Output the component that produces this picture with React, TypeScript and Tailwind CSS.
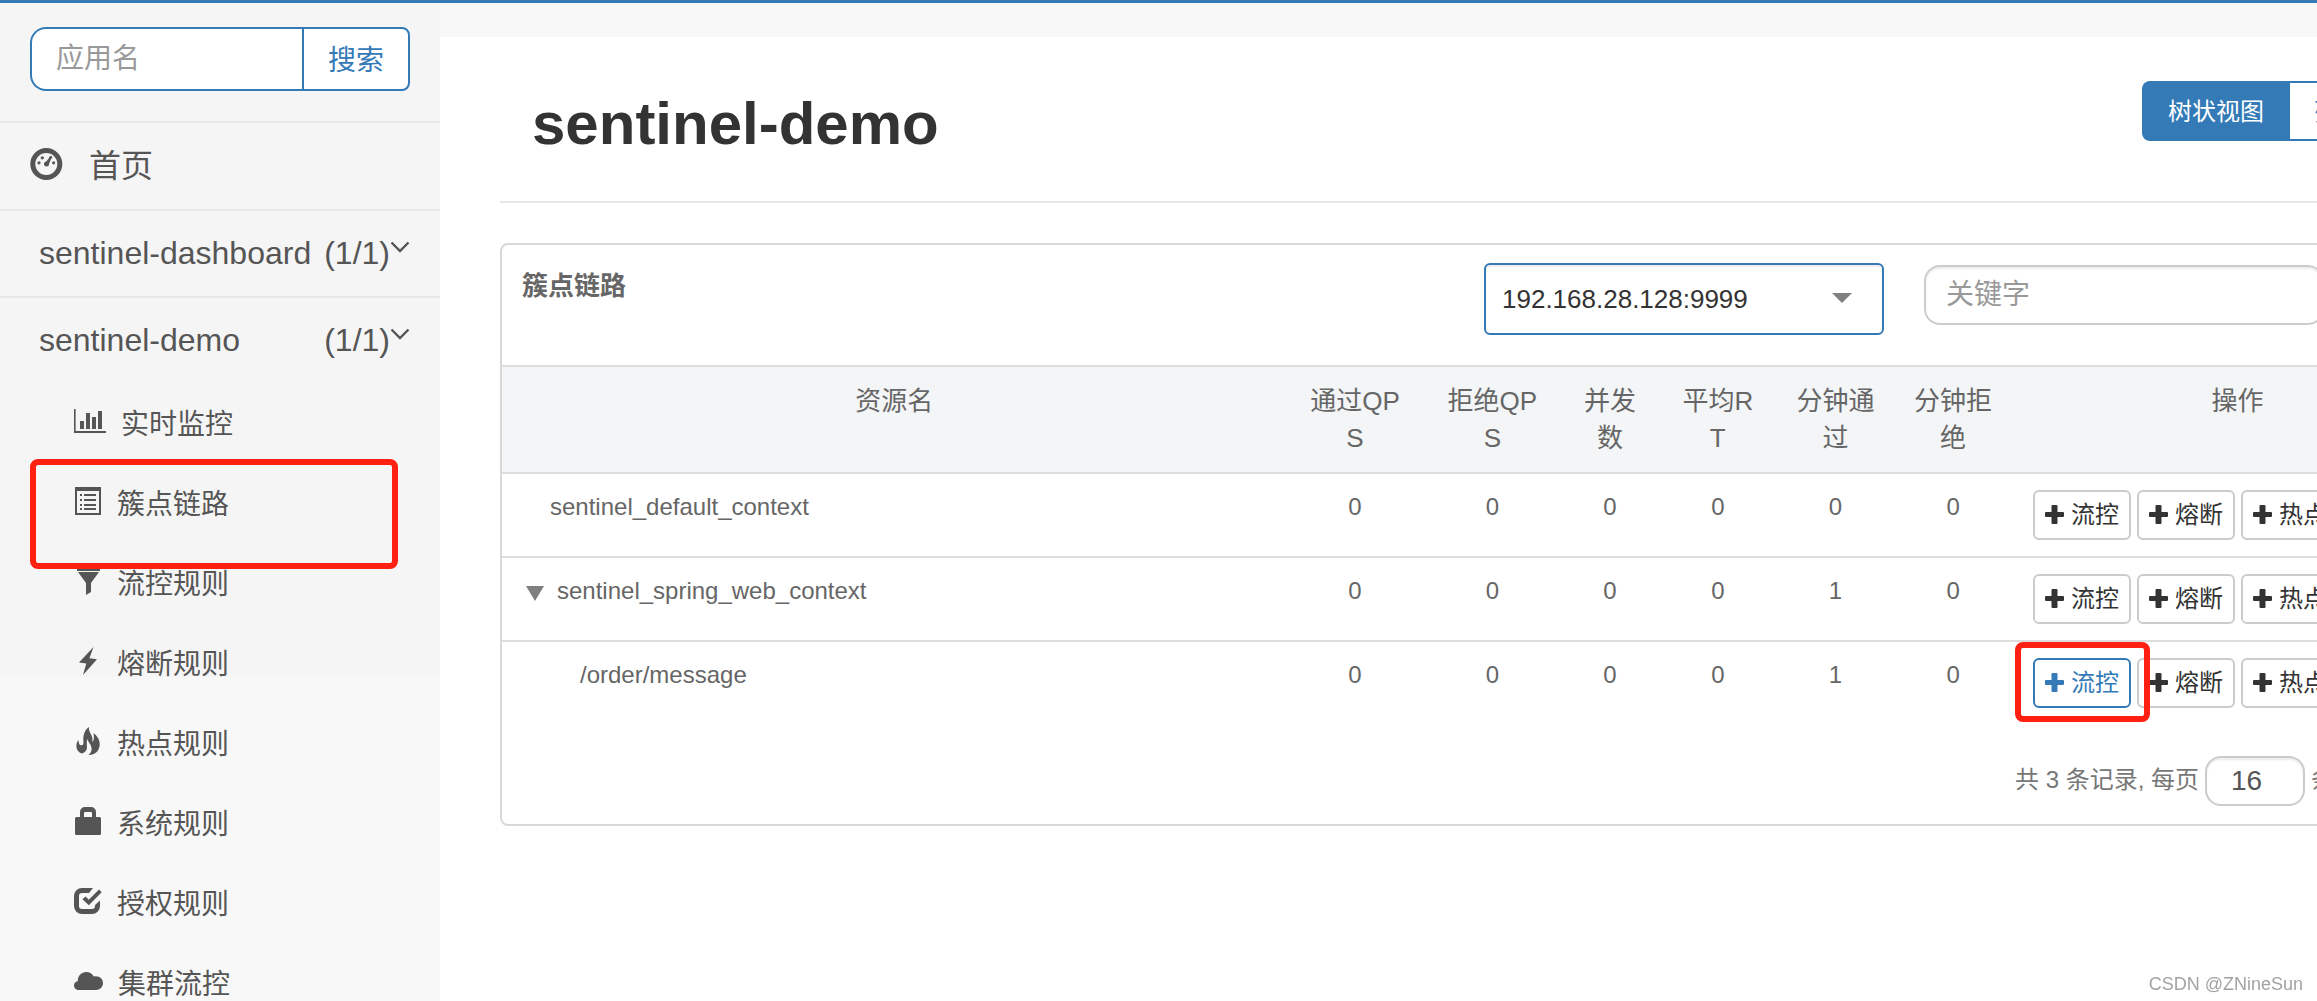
import type { ReactNode } from "react";

const DashboardIcon = () => (
  <svg width="33" height="32" viewBox="0 0 33 32" fill="currentColor">
    <circle cx="16.3" cy="16" r="13.5" fill="none" stroke="currentColor" strokeWidth="5" />
    <circle cx="9" cy="14.8" r="1.6" />
    <circle cx="12.3" cy="9.8" r="1.6" />
    <circle cx="20.8" cy="9.3" r="1.4" />
    <circle cx="23.6" cy="14.8" r="1.6" />
    <circle cx="16.5" cy="16" r="2.5" />
    <path d="M15 15L20.2 8.6l1.4.8L18.6 17z" />
  </svg>
);

const ChevronIcon = () => (
  <svg className="mb-3" width="20" height="12" viewBox="0 0 20 12" fill="none" stroke="currentColor" strokeWidth="2.4">
    <path d="M1.5 1.5L10 10l8.500-8.500" />
  </svg>
);

const ChartIcon = () => (
  <svg width="32" height="24" viewBox="0 0 32 24" fill="currentColor">
    <path d="M0 0h1.600v22H32v2H0zM6 12h4v8H6zM12 4h4v16h-4zM18 8h4v12h-4zM24 2h4v18h-4z" />
  </svg>
);

const ListIcon = () => (
  <svg width="26" height="28" viewBox="0 0 26 28" fill="currentColor">
    <path
      fillRule="evenodd"
      d="M0 0h26v28H0zM2 4v22h22V4zM5 7h2v2H5zM9 7h12v2H9zM5 12h2v2H5zM9 12h12v2H9zM5 17h2v2H5zM9 17h12v2H9zM5 21h2v2H5zM9 21h12v2H9z"
    />
  </svg>
);

const FilterIcon = () => (
  <svg width="23" height="28" viewBox="0 0 23 28" fill="currentColor">
    <path d="M0 0h23v4H0zM1 5h21l-8 11v9l-5 3V16z" />
  </svg>
);

const FlashIcon = () => (
  <svg width="18" height="28" viewBox="0 0 18 28" fill="currentColor">
    <path d="M14.500 0L0 15.600l7.300 1L4 28 18 12.200l-7.600-1z" />
  </svg>
);

const FireIcon = () => (
  <svg width="24" height="29" viewBox="0 0 24 29" fill="currentColor">
    <path d="M13 0c-.4 3 .6 4.700 1.800 7 1.400 2.700 2.200 4.700 1.400 8 1.800-1.400 2.100-4 1.300-8.800C21.500 9 24 13 23.700 18c-.4 6-5 10.300-11.200 10 2.700-2.200 3.800-5.300 2.700-8.600-.8-2.700-3-4.200-3.700-7.400-1.300 3-.4 5.500-.5 8.500-.1 2.600-2 5.200-5 6C2.500 25.500.4 22.500.4 19c0-3 1-4.800 2.200-6-.2 3 .6 4.900 2.400 5.300 2.300.4 2.600-1.700 2.400-4.300C7 8 8.500 3 13 0z" />
  </svg>
);

const LockIcon = () => (
  <svg width="26" height="28" viewBox="0 0 26 28" fill="currentColor">
    <path
      fillRule="evenodd"
      d="M5 10V5a5 5 0 0 1 5-5h6a5 5 0 0 1 5 5v5h3.500a1.500 1.500 0 0 1 1.500 1.500v15a1.500 1.500 0 0 1-1.500 1.500h-23A1.500 1.500 0 0 1 0 26.500v-15A1.500 1.500 0 0 1 1.500 10zM9 10h8V6a1 1 0 0 0-1-1h-6a1 1 0 0 0-1 1z"
    />
  </svg>
);

const CheckIcon = () => (
  <svg width="28" height="26" viewBox="0 0 28 26" fill="currentColor">
    <path d="M8 0h11l-4 5H8a3 3 0 0 0-3 3v10a3 3 0 0 0 3 3h10a3 3 0 0 0 3-3v-1l5-4.500V18a8 8 0 0 1-8 8H8a8 8 0 0 1-8-8V8a8 8 0 0 1 8-8z" />
    <path d="M8.500 11.200l3-2.700 3.300 3.300L25 1.500l2.700 2.800L14.800 17.200z" />
  </svg>
);

const CloudIcon = () => (
  <svg width="29" height="18" viewBox="0 0 29 18" fill="currentColor">
    <path d="M5 18C2 18 0 16 0 13.400c0-2 1.300-3.700 3.800-4.400C3.800 3.700 7.500 0 12.300 0c3.400 0 6 1.700 7.300 4.500 5-1.300 9.400 1.700 9.400 6.500 0 4-3 7-7 7z" />
  </svg>
);

const PlusIcon = () => (
  <svg width="19" height="19" viewBox="0 0 19 19" fill="currentColor">
    <path d="M7.500 0h4a1 1 0 0 1 1 1v6h5.500a1 1 0 0 1 1 1v3a1 1 0 0 1-1 1h-5.500v6a1 1 0 0 1-1 1h-4a1 1 0 0 1-1-1v-6H1a1 1 0 0 1-1-1V8a1 1 0 0 1 1-1h5.500V1a1 1 0 0 1 1-1z" />
  </svg>
);

const menu: { label: string; icon: ReactNode; active?: boolean }[] = [
  { label: "实时监控", icon: <ChartIcon /> },
  { label: "簇点链路", icon: <ListIcon />, active: true },
  { label: "流控规则", icon: <FilterIcon /> },
  { label: "熔断规则", icon: <FlashIcon /> },
  { label: "热点规则", icon: <FireIcon /> },
  { label: "系统规则", icon: <LockIcon /> },
  { label: "授权规则", icon: <CheckIcon /> },
  { label: "集群流控", icon: <CloudIcon /> },
];

const columns = [
  { title: "资源名", width: "w-[40%]" },
  { title: "通过QPS", width: "w-[7%]" },
  { title: "拒绝QPS", width: "w-[7%]" },
  { title: "并发数", width: "w-[5%]" },
  { title: "平均RT", width: "w-[6%]" },
  { title: "分钟通过", width: "w-[6%]" },
  { title: "分钟拒绝", width: "w-[6%]" },
  { title: "操作", width: "w-[23%]" },
];

const rows = [
  { name: "sentinel_default_context", indent: "pl-12", values: [0, 0, 0, 0, 0, 0] },
  { name: "sentinel_spring_web_context", indent: "pl-6", values: [0, 0, 0, 0, 1, 0], open: true },
  { name: "/order/message", indent: "pl-[78px]", values: [0, 0, 0, 0, 1, 0], marked: true },
];

const actions = ["流控", "熔断", "热点"];

const Sidebar = () => (
  <aside className="w-[440px] shrink-0 bg-[linear-gradient(#f5f5f5_674px,#f8f8f8_674px)] text-[#555]">
    <form className="flex border-b-2 border-[#e7e7e7] px-[30px] pt-6 pb-[30px]">
      <input
        type="text"
        aria-label="应用名"
        placeholder="应用名"
        className="h-16 min-w-0 flex-1 rounded-l-2xl border-2 border-r-0 border-[#337ab7] bg-white px-6 text-[28px] outline-none placeholder:text-[#999]"
      />
      <button
        type="button"
        className="h-16 w-[108px] rounded-r-lg border-2 border-[#337ab7] bg-white pt-1 text-[28px] text-[#337ab7]"
      >
        搜索
      </button>
    </form>
    <nav>
      <a href="#" className="flex h-[88px] items-center gap-[26px] border-b-2 border-[#e7e7e7] px-[30px] pb-1">
        <DashboardIcon />
        <span className="pt-[3px] text-[32px]">首页</span>
      </a>
      <a href="#" className="flex h-[87px] items-center border-b-2 border-[#e7e7e7] pr-[30px] pb-[2px] pl-[39px] text-[32px]">
        <span className="flex-1">sentinel-dashboard</span>
        <span>(1/1)</span>
        <ChevronIcon />
      </a>
      <a href="#" className="flex h-[85px] items-center pr-[30px] pb-[2px] pl-[39px] text-[32px]">
        <span className="flex-1">sentinel-demo</span>
        <span>(1/1)</span>
        <ChevronIcon />
      </a>
      <ul>
        {menu.map((item) => (
          <li key={item.label} className="relative">
            <a href="#" className="flex h-20 items-center gap-[15px] pl-[74px] text-[28px]">
              <span className="flex min-w-7 justify-center pb-1">{item.icon}</span>
              <span className="pt-[3px]">{item.label}</span>
            </a>
            {item.active && (
              <div className="absolute -top-1 left-[30px] z-10 h-[110px] w-[368px] rounded-lg border-6 border-[#ff2012]" />
            )}
          </li>
        ))}
      </ul>
    </nav>
  </aside>
);

const ResourceTable = () => (
  <table className="w-full table-fixed border-collapse text-[#666]">
    <thead>
      <tr className="border-y-2 border-[#ddd] bg-[#f3f5f7]">
        {columns.map((col) => (
          <th
            key={col.title}
            className={`${col.width} px-4 pt-4 pb-[15px] align-top text-[26px] leading-[37px] font-normal break-all`}
          >
            {col.title}
          </th>
        ))}
      </tr>
    </thead>
    <tbody className="text-2xl leading-[34px]">
      {rows.map((row) => (
        <tr key={row.name} className="border-[#ddd] not-last:border-b-2">
          <td className={`${row.indent} py-4 align-top`}>
            {row.open ? (
              <button type="button" className="flex items-center gap-[13px]">
                <svg width="18" height="15" viewBox="0 0 18 15" fill="#808080" className="mt-1">
                  <path d="M0 0h18L9 15z" />
                </svg>
                {row.name}
              </button>
            ) : (
              row.name
            )}
          </td>
          {row.values.map((value, i) => (
            <td key={i} className="py-4 text-center align-top">
              {value}
            </td>
          ))}
          <td className="py-4 pl-[21px] align-top">
            <div className="relative flex gap-[6px]">
              {actions.map((action, i) => (
                <button
                  key={action}
                  type="button"
                  className={`flex h-[50px] w-[98px] items-center gap-[7px] rounded-md border-2 bg-white pl-[10px] whitespace-nowrap ${
                    row.marked && i === 0 ? "border-[#337ab7] text-[#337ab7]" : "border-[#ccc] text-[#333]"
                  }`}
                >
                  <span className="pb-[2px]">
                    <PlusIcon />
                  </span>
                  {action}
                </button>
              ))}
              {row.marked && (
                <div className="absolute -top-4 -left-[18px] h-20 w-[135px] rounded-lg border-6 border-[#ff2012]" />
              )}
            </div>
          </td>
        </tr>
      ))}
    </tbody>
  </table>
);

const App = () => {
  return (
    <div className="flex h-screen flex-col overflow-hidden bg-white font-['Liberation_Sans','Noto_Sans_CJK_SC',sans-serif]">
      <div className="h-[3px] shrink-0 bg-[#337ab7]" />
      <div className="flex min-h-0 flex-1">
        <Sidebar />
        <main className="min-w-0 flex-1 overflow-hidden">
          <div className="h-[34px] bg-[#f8f8f8]" />
          <div className="min-w-[2025px] pl-[60px]">
            <header className="flex items-start justify-between border-b-2 border-[#e7e7e7] pt-11 pr-[29px] pb-[34px] pl-8">
              <h1 className="text-[60px] leading-[86px] font-bold text-[#333]">sentinel-demo</h1>
              <div className="flex text-2xl">
                <button type="button" className="h-[60px] rounded-l-lg bg-[#337ab7] px-[26px] pt-[2px] text-white">
                  树状视图
                </button>
                <button
                  type="button"
                  className="h-[60px] rounded-r-lg border-2 border-l-0 border-[#337ab7] bg-white px-6 pt-[2px] text-[#337ab7]"
                >
                  列表视图
                </button>
              </div>
            </header>

            <section className="mt-10 rounded-lg border-2 border-[#d8d8d8]">
              <div className="flex h-[120px] items-start pt-[18px] pr-[139px] pl-5">
                <h2 className="flex-1 text-[26px] leading-[46px] font-bold text-[#666]">簇点链路</h2>
                <div className="relative mr-10">
                  <select
                    aria-label="机器"
                    className="h-[72px] w-[400px] appearance-none rounded-md border-2 border-[#337ab7] bg-white px-4 text-[26px] text-[#333] shadow-[inset_0_2px_2px_rgba(0,0,0,0.075)]"
                  >
                    <option>192.168.28.128:9999</option>
                  </select>
                  <svg
                    className="pointer-events-none absolute top-[30px] right-8"
                    width="20"
                    height="10"
                    viewBox="0 0 20 10"
                    fill="#808080"
                  >
                    <path d="M0 0h20L10 10z" />
                  </svg>
                </div>
                <input
                  type="text"
                  aria-label="关键字"
                  placeholder="关键字"
                  className="mt-[2px] h-[60px] w-[400px] rounded-2xl border-2 border-[#ccc] bg-white px-5 text-[28px] shadow-[inset_0_2px_2px_rgba(0,0,0,0.075)] placeholder:text-[#999]"
                />
              </div>

              <ResourceTable />

              <div className="flex items-center justify-end pt-8 pr-10 pb-[18px] text-2xl text-[#777]">
                <label className="flex w-[408px] items-center whitespace-nowrap">
                  <span className="pb-[2px]">共 3 条记录, 每页</span>
                  <input
                    type="text"
                    defaultValue="16"
                    className="mx-[6px] h-[50px] w-[100px] rounded-2xl border-2 border-[#ccc] bg-white px-6 text-[28px] text-[#555] shadow-[inset_0_2px_2px_rgba(0,0,0,0.075)]"
                  />
                  <span className="pb-[2px]">条记录</span>
                </label>
              </div>
            </section>
          </div>
        </main>
      </div>
      <div className="fixed right-[14px] bottom-[3px] text-lg text-[#a3a3a3]">CSDN @ZNineSun</div>
    </div>
  );
};

export default App;
